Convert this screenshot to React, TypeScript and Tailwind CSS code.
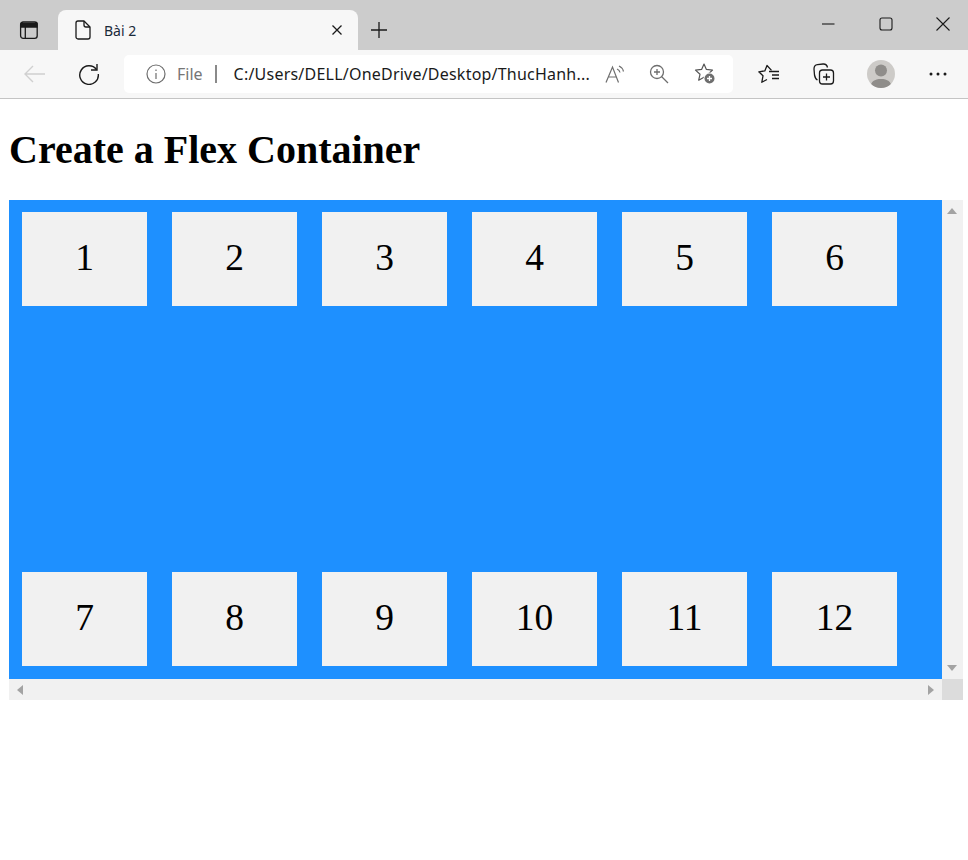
import React from 'react';

const ui = "font-['Segoe_UI','Noto_Sans','Open_Sans',sans-serif]";

const items = ['1', '2', '3', '4', '5', '6', '7', '8', '9', '10', '11', '12'];

const TabStrip: React.FC = () => (
  <div className="flex h-[50px] items-end bg-[#cccccc]">
    <div className="flex h-[50px] w-[58px] shrink-0 items-center justify-center pt-[10px]">
      <svg width="20" height="20" viewBox="0 0 20 20" fill="none" stroke="#1a1a1a" strokeWidth="1.3">
        <rect x="1.6" y="2" width="16.6" height="16.4" rx="2.6" />
        <path d="M2 3.5h16V7H2z" fill="#1a1a1a" />
        <path d="M6.3 7v11" />
      </svg>
    </div>
    <div className="flex h-10 w-[300px] shrink-0 items-center rounded-t-lg bg-[#f7f7f7] pl-[16px]">
      <svg width="18" height="20" viewBox="0 0 18 20" fill="none" stroke="#1a1a1a" strokeWidth="1.3" strokeLinejoin="round">
        <path d="M2 3a2 2 0 0 1 2-2h6l6 6v10a2 2 0 0 1-2 2H4a2 2 0 0 1-2-2z" />
        <path d="M10 1v4a2 2 0 0 0 2 2h4" />
      </svg>
      <span className="ml-[12px] text-[14px] text-[#1a2a3a]">Bài 2</span>
      <svg className="ml-auto mr-[15px]" width="12" height="12" viewBox="0 0 12 12" stroke="#1a1a1a" strokeWidth="1.3">
        <path d="M1.5 1.5l9 9M10.500 1.500l-9 9" />
      </svg>
    </div>
    <div className="flex h-10 w-[42px] items-center justify-center">
      <svg width="18" height="18" viewBox="0 0 18 18" stroke="#1a1a1a" strokeWidth="1.3">
        <path d="M9 1v16M1 9h16" />
      </svg>
    </div>
    <div className="ml-auto flex h-[50px] items-start">
      <div className="flex h-[50px] w-[58px] items-center justify-center pb-[2px]">
        <svg width="14" height="14" viewBox="0 0 14 14" stroke="#1a1a1a" strokeWidth="1.1">
          <path d="M1 7h12.500" />
        </svg>
      </div>
      <div className="flex h-[50px] w-[58px] items-center justify-center pb-[2px]">
        <svg width="14" height="14" viewBox="0 0 14 14" fill="none" stroke="#1a1a1a" strokeWidth="1.1">
          <rect x="1" y="1" width="12" height="12" rx="2" />
        </svg>
      </div>
      <div className="flex h-[50px] w-[53px] items-center justify-center pb-[2px] pl-[3px]">
        <svg width="14" height="14" viewBox="0 0 14 14" stroke="#1a1a1a" strokeWidth="1.1">
          <path d="M.5.500l13 13M13.500.500l-13 13" />
        </svg>
      </div>
    </div>
  </div>
);

const Toolbar: React.FC = () => (
  <div className="flex h-[49px] items-center border-b border-[#c4c4c4] bg-[#f7f7f7] pb-[1px]">
    <div className="flex w-[68px] shrink-0 items-center justify-center">
      <svg width="22" height="20" viewBox="0 0 22 20" fill="none" stroke="#d0d0d0" strokeWidth="1.4">
        <path d="M22 10H2M10 2l-8 8 8 8" />
      </svg>
    </div>
    <div className="flex w-[42px] shrink-0 items-center justify-center">
      <svg width="22" height="22" viewBox="0 0 22 22" fill="none" stroke="#1a1a1a" strokeWidth="1.4">
        <path d="M18.500 6.500A9.300 9.300 0 1 0 20.300 11" />
        <path d="M19 1v6h-6" />
      </svg>
    </div>
    <div className="ml-[14px] flex h-[38px] w-[609px] shrink-0 items-center rounded-[5px] bg-white pl-[22px]">
      <svg width="20" height="20" viewBox="0 0 20 20" fill="none" stroke="#6e6e6e" strokeWidth="1.2">
        <circle cx="10" cy="10" r="9" />
        <path d="M10 9v6M10 5.500v1.500" />
      </svg>
      <span className={`${ui} ml-[11px] text-[16px] text-[#767676]`}>File</span>
      <div className="ml-[12px] h-[18px] w-[2px] bg-[#8a8a8a]" />
      <span className={`${ui} ml-[17px] text-[16px] tracking-[0.22px] text-[#1a1a1a]`}>C:/Users/DELL/OneDrive/Desktop/ThucHanh...</span>
      <svg className="ml-[15px]" width="22" height="20" viewBox="0 0 22 20" fill="none" stroke="#6e6e6e" strokeWidth="1.2">
        <path d="M1 18.500L7.500 3l6 15.500M3.200 13h8.600" />
        <path d="M12 5a4.500 4.500 0 0 1 3 3.500M14 2a8 8 0 0 1 4.500 5.500" />
      </svg>
      <svg className="ml-[22px]" width="20" height="20" viewBox="0 0 20 20" fill="none" stroke="#6e6e6e" strokeWidth="1.3">
        <circle cx="8" cy="8" r="6.500" />
        <path d="M8 5v6M5 8h6M12.500 12.500L19 19" />
      </svg>
      <svg className="ml-[25px]" width="22" height="22" viewBox="0 0 22 22" fill="none" stroke="#555555" strokeWidth="1.2" strokeLinejoin="round">
        <path d="M10 1l2.400 5.400 6.100.7-4.500 4.200 1.300 5.900-5.300-3-5.300 3 1.300-5.900L1.500 7.100l6.100-.7z" />
        <circle cx="15.500" cy="15.500" r="6" fill="#ffffff" stroke="none" />
        <circle cx="15.500" cy="15.500" r="5" fill="#6e6e6e" stroke="none" />
        <path d="M15.500 13v5M13 15.500h5" stroke="#ffffff" strokeWidth="1.300" />
      </svg>
    </div>
    <svg className="ml-[25px]" width="22" height="20" viewBox="0 0 22 20" fill="none" stroke="#1a1a1a" strokeWidth="1.300" strokeLinejoin="round">
      <path d="M13.500 5.900L9 1 6.800 6.400 .800 7.300 5 11.300 3.800 17.800 9 15" transform="translate(0 .5)" />
      <path d="M11 7.500h10M14 11h7M14 14.500h7" />
    </svg>
    <svg className="ml-[33px]" width="22" height="22" viewBox="0 0 22 22" fill="none" stroke="#1a1a1a" strokeWidth="1.300">
      <rect x="6.500" y="7" width="14" height="14" rx="3" />
      <path d="M13.500 10.500v7M10 14h7" />
      <path d="M4.500 17C2.500 16 2 14.500 1.500 12L1 6c0-2.500 1-4 3.500-4.300L10 1c2.500-.2 4 1 4.500 3.500" />
    </svg>
    <div className="ml-[32px] flex h-7 w-7 items-center justify-center overflow-hidden rounded-full bg-[#cdcbc8]">
      <svg width="28" height="28" viewBox="0 0 28 28" fill="#8f8d8a">
        <circle cx="14" cy="10.500" r="6" />
        <path d="M3.500 28c0-6.500 4-9 10.500-9s10.500 2.500 10.500 9z" />
      </svg>
    </div>
    <svg className="ml-[34px]" width="18" height="4" viewBox="0 0 18 4" fill="#1a1a1a">
      <circle cx="2" cy="2" r="1.500" />
      <circle cx="9" cy="2" r="1.500" />
      <circle cx="16" cy="2" r="1.500" />
    </svg>
  </div>
);

const FlexDemo: React.FC = () => (
  <div className="ml-[9px] grid w-[954px] grid-cols-[933px_21px] grid-rows-[479px_21px]">
    <div className="flex flex-wrap content-between gap-x-[25px] overflow-hidden bg-[#1e90ff] pl-[13px] pr-[13px] pt-[12px] pb-[13px]">
      {items.map((n) => (
        <div key={n} className="flex h-[94px] w-[125px] items-center justify-center bg-[#f1f1f1] pb-[2px] text-[37.500px] leading-none text-black">
          {n}
        </div>
      ))}
    </div>
    <div className="flex flex-col items-center justify-between bg-[#f1f1f1] py-[8px] pr-[1px]">
      <div className="h-0 w-0 border-x-[5px] border-b-[6px] border-x-transparent border-b-[#a3a3a3]" />
      <div className="h-0 w-0 border-x-[5px] border-t-[6px] border-x-transparent border-t-[#a3a3a3]" />
    </div>
    <div className="flex items-center justify-between bg-[#f1f1f1] px-[8px]">
      <div className="h-0 w-0 border-y-[5px] border-r-[6px] border-y-transparent border-r-[#a3a3a3]" />
      <div className="h-0 w-0 border-y-[5px] border-l-[6px] border-y-transparent border-l-[#a3a3a3]" />
    </div>
    <div className="bg-[#dcdcdc]" />
  </div>
);

export default function App() {
  return (
    <div className="h-[860px] w-[968px] overflow-hidden bg-white font-['Liberation_Serif',serif]">
      <div className={ui}>
        <TabStrip />
        <Toolbar />
      </div>
      <h1 className="mb-[27px] ml-[9px] mt-[28px] text-[40px] font-bold leading-[46px] text-black">Create a Flex Container</h1>
      <FlexDemo />
    </div>
  );
}
